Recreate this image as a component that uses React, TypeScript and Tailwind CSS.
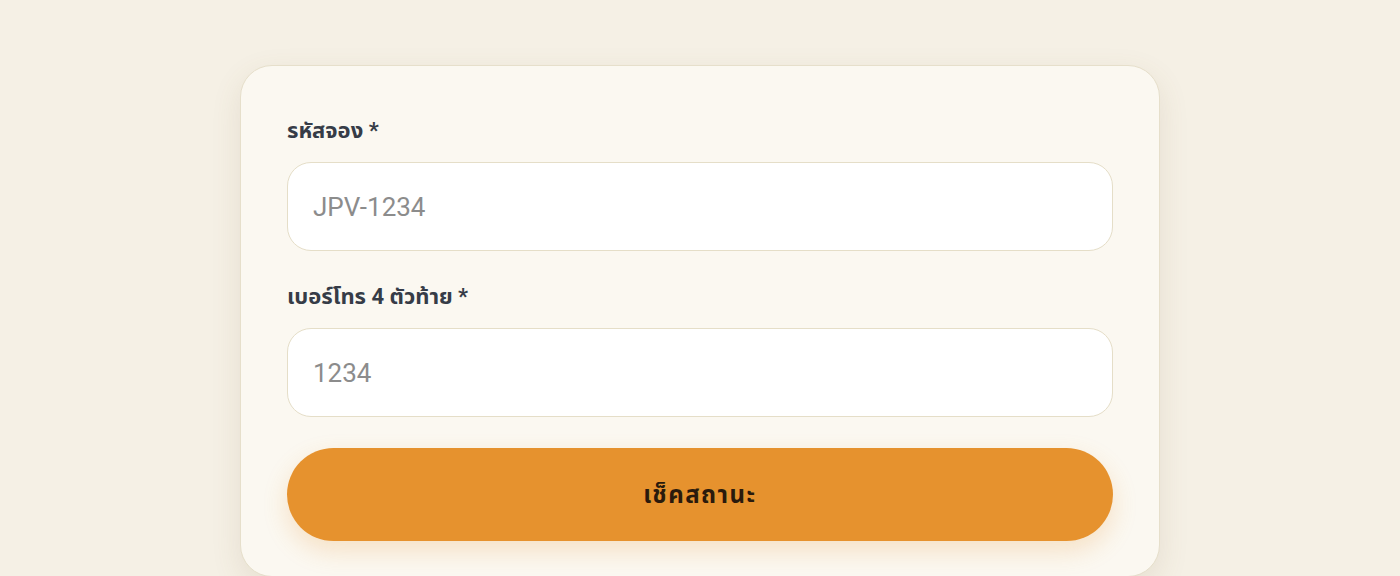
import React from "react";

export default function App() {
  return (
    <div
      className="min-h-[576px] w-full bg-[#F5F0E5] pt-[65px]"
      style={{ fontFamily: 'Roboto, "Noto Sans", "Noto Sans Thai", sans-serif' }}
    >
      <div className="mx-auto w-[920px] rounded-[32px] border border-[#E6DFCB] bg-[#FBF8F1] px-[46px] pt-[48px] pb-[35px] shadow-[0_10px_30px_rgba(120,100,60,0.12)]">
        <div className="mb-[29px]">
          <label className="mb-[14px] block text-[22px] font-bold leading-[34px] text-[#363C47]">
            รหัสจอง *
          </label>
          <input
            className="block h-[89px] w-full rounded-[24px] border border-[#E5DEC8] bg-white pl-[25px] pr-[24px] text-[26px] text-[#333] outline-none placeholder:text-[#8C8C8C]"
            placeholder="JPV-1234"
          />
        </div>
        <div className="mb-[31px]">
          <label className="mb-[14px] block text-[22px] font-bold leading-[34px] text-[#363C47]">
            เบอร์โทร 4 ตัวท้าย *
          </label>
          <input
            className="block h-[89px] w-full rounded-[24px] border border-[#E5DEC8] bg-white pl-[25px] pr-[24px] text-[26px] text-[#333] outline-none placeholder:text-[#8C8C8C]"
            placeholder="1234"
          />
        </div>
        <button className="block h-[93px] w-full rounded-full bg-[#E6922E] text-[24px] font-bold tracking-[1.5px] text-[#2A1A0C] shadow-[0_10px_24px_rgba(230,146,46,0.22)]">
          เช็คสถานะ
        </button>
      </div>
    </div>
  );
}
